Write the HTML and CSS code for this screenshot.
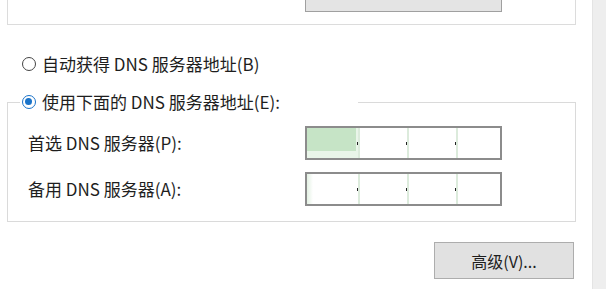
FILE: index.html
```html
<!DOCTYPE html>
<html lang="zh-CN">
<head>
<meta charset="utf-8">
<title>DNS</title>
<link rel="stylesheet" href="styles.css">
</head>
<body>
<div class="dialog">
  <div class="main">
    <div class="top-group">
      <div class="top-btn"></div>
    </div>
    <div class="radio-row">
      <span class="radio"></span>
      <span class="radio-text">自动获得 DNS 服务器地址(B)</span>
    </div>
    <fieldset class="group">
      <legend class="legend">
        <span class="radio checked"></span>
        <span class="radio-text">使用下面的 DNS 服务器地址(E):</span>
      </legend>
      <div class="rows">
        <div class="label">首选 DNS 服务器(P):</div>
        <div class="ip">
          <div class="seg first selected"><span class="sel-fill"></span></div>
          <div class="seg"></div>
          <div class="seg"></div>
          <div class="seg last"></div>
        </div>
        <div class="label">备用 DNS 服务器(A):</div>
        <div class="ip">
          <div class="seg first tint"></div>
          <div class="seg"></div>
          <div class="seg"></div>
          <div class="seg last"></div>
        </div>
      </div>
    </fieldset>
    <div class="actions">
      <div class="btn">高级(V)...</div>
    </div>
  </div>
  <div class="stripe"></div>
</div>
</body>
</html>
```
FILE: styles.css
```css
html, body {
  margin: 0;
  padding: 0;
  background: #ffffff;
}
body {
  width: 606px;
  height: 289px;
  overflow: hidden;
  font-family: "Noto Sans CJK SC", "Noto Sans", sans-serif;
  font-size: 17px;
  color: #1e1e1e;
}
.dialog {
  display: flex;
  height: 289px;
}
.main {
  width: 593px;
  padding-left: 7px;
  box-sizing: border-box;
}
.stripe {
  width: 13px;
  background: #eeeeee;
  border-left: 1px solid #e4e4e4;
}
.top-group {
  width: 569px;
  height: 25px;
  box-sizing: border-box;
  border: 1px solid #dcdcdc;
  border-top: none;
  padding-left: 297px;
}
.top-btn {
  width: 197px;
  height: 12px;
  box-sizing: border-box;
  background: #e4e4e4;
  border: 1px solid #a0a0a0;
  border-top: none;
}
.radio-row {
  display: flex;
  align-items: center;
  height: 20px;
  margin-top: 29px;
  padding-left: 15px;
}
.radio {
  width: 14px;
  height: 14px;
  box-sizing: border-box;
  border: 1.5px solid #444444;
  border-radius: 50%;
  background: #ffffff;
  margin-right: 6px;
  flex: none;
  position: relative;
}
.radio.checked {
  border-color: #1a73c9;
}
.radio.checked::after {
  content: "";
  position: absolute;
  left: 2px;
  top: 2px;
  width: 7px;
  height: 7px;
  border-radius: 50%;
  background: #1a73c9;
}
.radio-text {
  line-height: 20px;
  white-space: nowrap;
}
.group {
  margin: 18px 0 0 0;
  padding: 0;
  width: 569px;
  box-sizing: border-box;
  border: 1px solid #dadada;
  min-width: 0;
}
.legend {
  display: flex;
  align-items: center;
  width: 338px;
  height: 20px;
  box-sizing: border-box;
  padding: 0 0 0 2px;
  margin-left: 12px;
  background: #ffffff;
}
.rows {
  display: grid;
  grid-template-columns: 277px 197px;
  grid-auto-rows: 34px;
  row-gap: 12px;
  align-items: center;
  padding: 14px 0 15px 20px;
}
.label {
  white-space: nowrap;
  line-height: 20px;
}
.ip {
  height: 34px;
  box-sizing: border-box;
  border: 2px solid #8c8c8c;
  display: flex;
  background: #ffffff;
}
.seg {
  flex: none;
  width: 47px;
  position: relative;
  border-left: 2px solid #dcebdc;
}
.seg.first {
  width: 51px;
  border-left: none;
}
.seg.last {
  width: 46px;
}
.seg:not(.last)::after {
  content: "";
  position: absolute;
  right: -1px;
  top: 14px;
  width: 2px;
  height: 3px;
  background: #222222;
}
.seg.selected {
  background: #e9f5e9;
}
.sel-fill {
  display: block;
  height: 23px;
  margin-right: 2px;
  background: #c6e4c6;
}
.seg.tint {
  background: linear-gradient(to right, #e3f1e3 0, #ffffff 6px);
}
.actions {
  width: 569px;
  display: flex;
  justify-content: flex-end;
  padding-right: 2px;
  box-sizing: border-box;
  margin-top: 20px;
}
.btn {
  width: 140px;
  height: 37px;
  box-sizing: border-box;
  background: #e1e1e1;
  border: 1px solid #adadad;
  display: flex;
  align-items: center;
  justify-content: center;
  color: #1e1e1e;
  font-size: 16px;
}
```
